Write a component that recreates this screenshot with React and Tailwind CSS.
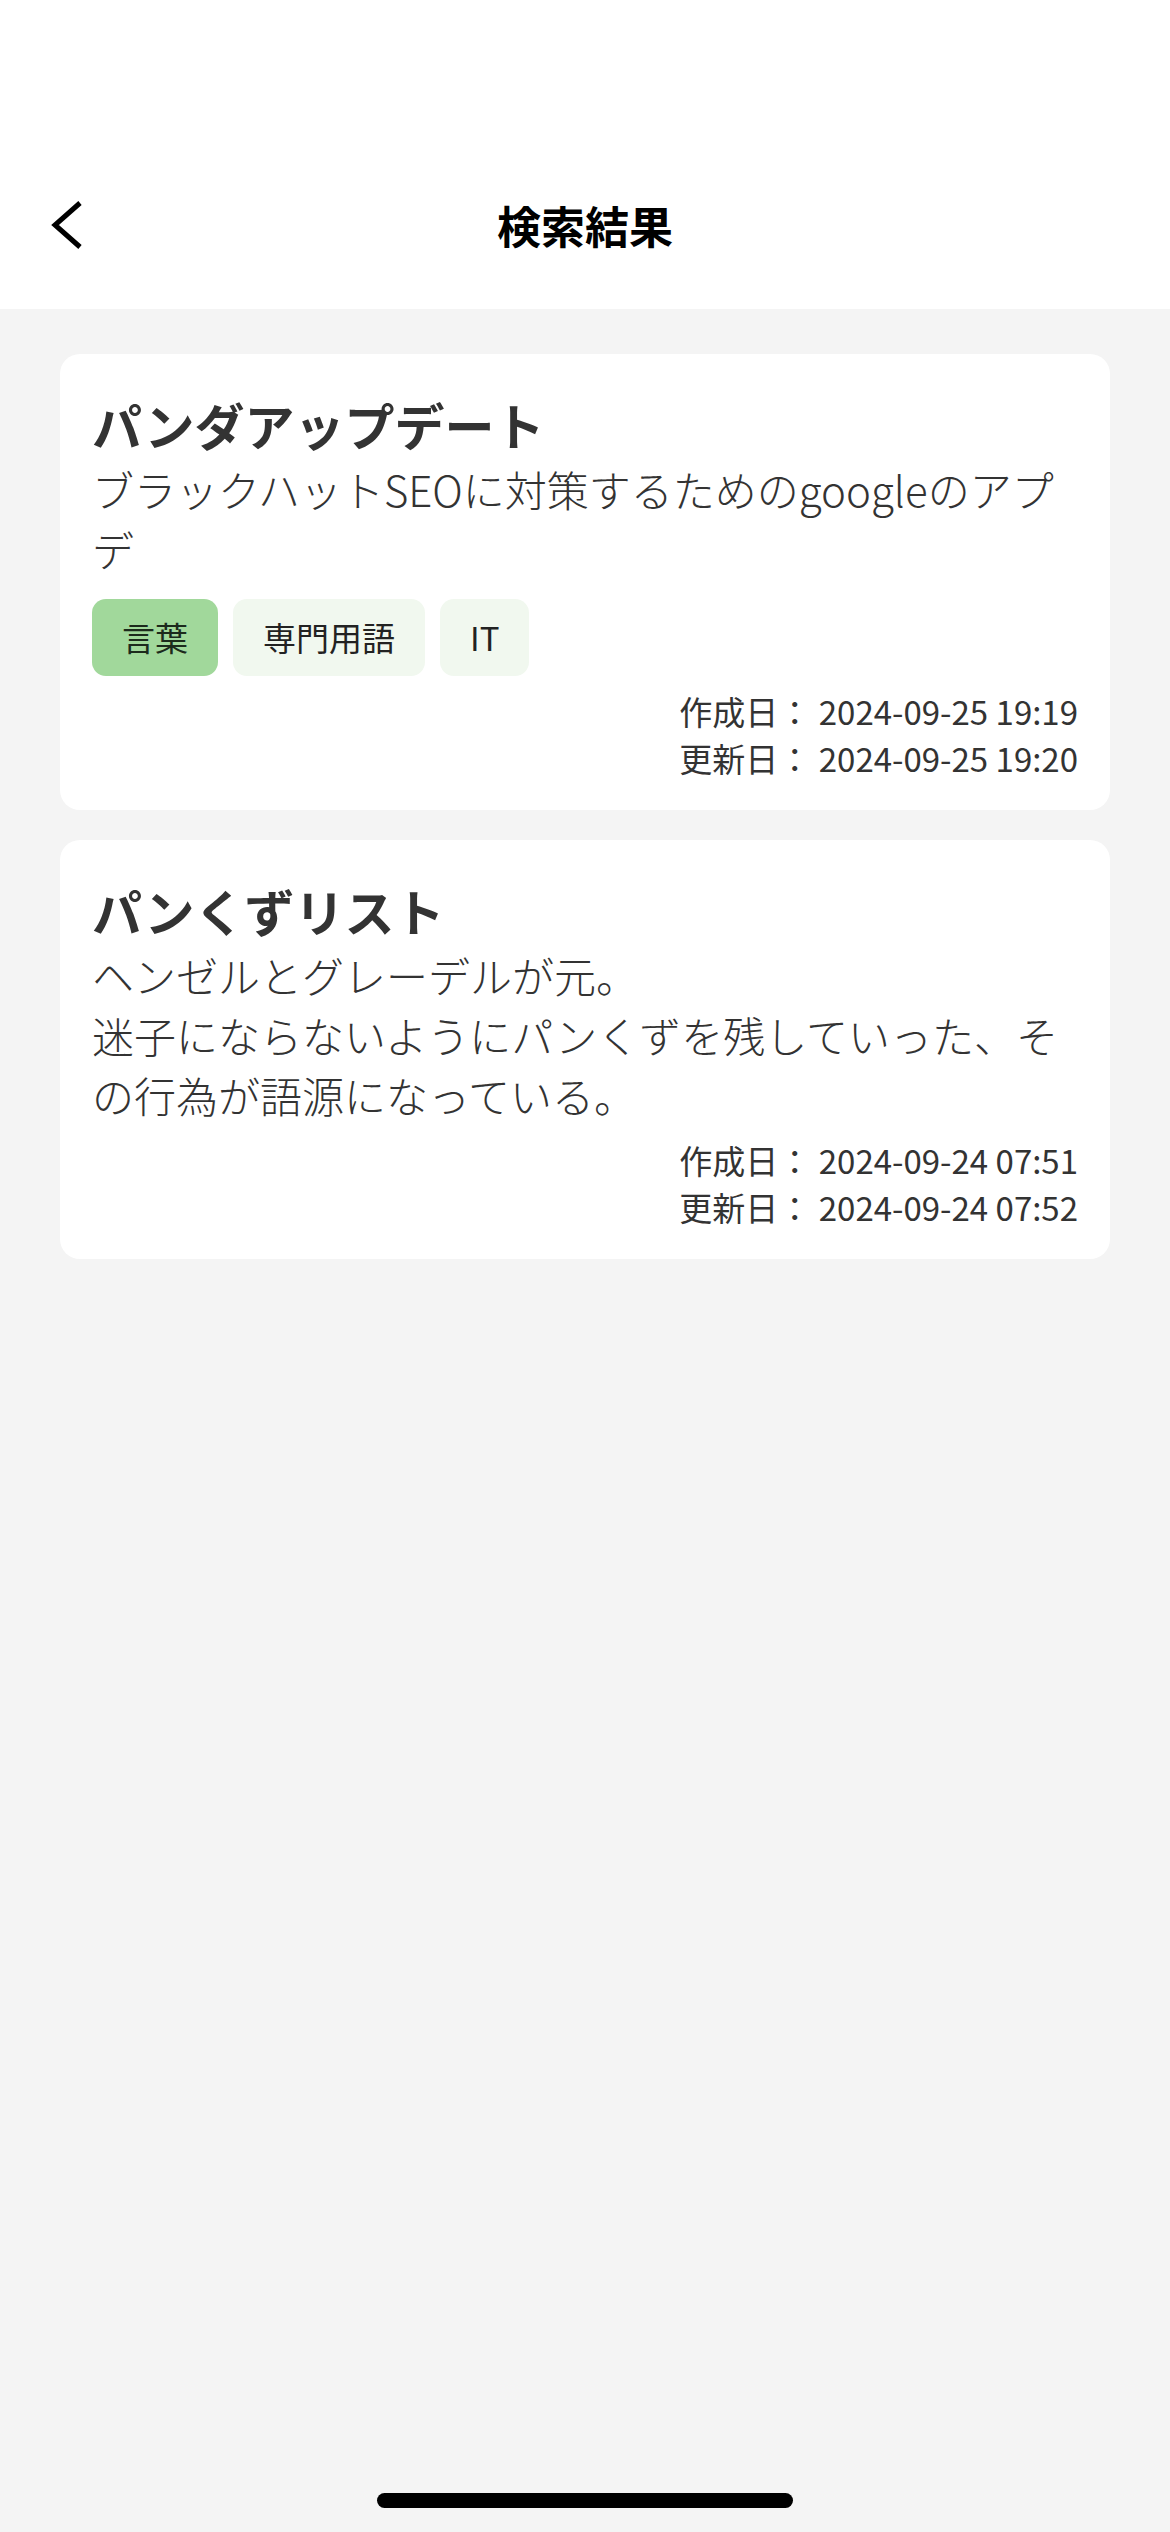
import React from "react";

const results = [
  {
    title: "パンダアップデート",
    body: "ブラックハットSEOに対策するためのgoogleのアプデ",
    tags: ["言葉", "専門用語", "IT"],
    created: "2024-09-25 19:19",
    updated: "2024-09-25 19:20",
  },
  {
    title: "パンくずリスト",
    body: "ヘンゼルとグレーデルが元。\n迷子にならないようにパンくずを残していった、その行為が語源になっている。",
    tags: [],
    created: "2024-09-24 07:51",
    updated: "2024-09-24 07:52",
  },
];

function BackIcon() {
  return (
    <svg width="40" height="56" viewBox="0 0 40 56" fill="none">
      <polyline
        points="31,6 6,28 31,50"
        stroke="#000"
        strokeWidth="5"
        strokeLinecap="butt"
        strokeLinejoin="miter"
      />
    </svg>
  );
}

function ResultCard({ item }) {
  return (
    <div className="bg-white rounded-[20px] px-[32px] pt-[35px] pb-[28px] text-[#333]">
      <h2 className="text-[50px] leading-[70px] font-bold">{item.title}</h2>
      <p className="text-[42px] leading-[60px] font-light whitespace-pre-line">{item.body}</p>
      {item.tags.length > 0 && (
        <div className="flex gap-[15px] mt-[20px] mb-[2px]">
          {item.tags.map((tag, i) => (
            <span
              key={tag}
              className={
                i === 0
                  ? "h-[77px] px-[30px] rounded-[14px] flex items-center text-[33px] bg-[#a1d89b] text-[#1c2a1c]"
                  : "h-[77px] px-[30px] rounded-[14px] flex items-center text-[33px] bg-[#f1f8ef] text-[#222]"
              }
            >
              {tag}
            </span>
          ))}
        </div>
      )}
      <div className="mt-[12px] text-right text-[33px] leading-[47px]">
        <div>作成日： {item.created}</div>
        <div>更新日： {item.updated}</div>
      </div>
    </div>
  );
}

export default function App() {
  return (
    <div
      className="min-h-[2532px] w-full bg-[#f4f4f4] flex flex-col"
      style={{ fontFamily: "'Noto Sans CJK JP', 'Noto Sans', sans-serif" }}
    >
      <header className="h-[309px] bg-white flex flex-col justify-end">
        <div className="h-[168px] grid grid-cols-[140px_1fr_140px] items-center">
          <button className="pl-[49px] flex items-center" aria-label="戻る">
            <BackIcon />
          </button>
          <h1 className="text-center text-[44px] leading-[66px] font-bold text-black">検索結果</h1>
          <div />
        </div>
      </header>

      <main className="px-[60px] pt-[45px] flex flex-col gap-[30px]">
        {results.map((item) => (
          <ResultCard key={item.title} item={item} />
        ))}
      </main>

      <div className="mt-auto mb-[24px] flex justify-center">
        <div className="w-[416px] h-[15px] rounded-full bg-black" />
      </div>
    </div>
  );
}
